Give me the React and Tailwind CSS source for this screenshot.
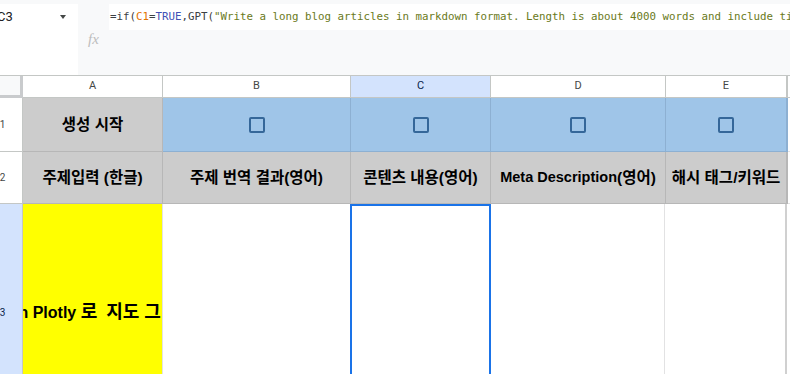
export default function App() {
  const sheetFont = { fontFamily: '"Liberation Sans", "Noto Sans CJK KR", Arial, sans-serif' };
  const headFont = { fontFamily: 'Roboto, "Liberation Sans", sans-serif' };

  const Checkbox = () => (
    <div className="w-[16px] h-[16px] rounded-[2px] border-[2.5px] border-[#356799]" />
  );

  return (
    <div className="w-[790px] h-[374px] overflow-hidden bg-white relative">
      {/* top strip */}
      <div className="h-[4px] bg-[#f8f9fa]" />
      {/* formula area */}
      <div className="flex h-[72px] border-b border-[#c4c7c5]">
        <div className="w-[78px] shrink-0 bg-white flex items-start pt-[4px]">
          <span className="ml-[-3px] text-[13px] text-[#202124] leading-[18px]" style={headFont}>C3</span>
          <div className="ml-[47px] mt-[7px] w-0 h-0 border-l-[3.5px] border-r-[3.5px] border-t-[4px] border-l-transparent border-r-transparent border-t-[#444746]" />
        </div>
        <div className="flex-1 min-w-0 bg-[#f8f9fa] flex">
          <div className="w-[31px] shrink-0 flex items-end justify-center pb-[28px]">
            <span className="italic text-[15px] text-[#bdbdbd] leading-none" style={{ fontFamily: '"Liberation Serif", serif' }}>fx</span>
          </div>
          <div className="flex-1 min-w-0 self-start h-[26px] bg-white flex items-center overflow-hidden whitespace-nowrap">
            <span className="text-[10.8px] pl-[1px] text-[#3c4043]" style={{ fontFamily: '"DejaVu Sans Mono", "Liberation Mono", monospace' }}>
              =if(<span className="text-[#e37400]">C1</span>=<span className="text-[#3f51b5]">TRUE</span>,GPT(<span className="text-[#6a7a1b]">"Write a long blog articles in markdown format. Length is about 4000 words and include titles</span>
            </span>
          </div>
        </div>
      </div>

      {/* column header row */}
      <div className="flex h-[22px] text-[11px] text-[#444746]" style={headFont}>
        <div className="w-[23px] shrink-0 bg-[#f8f9fa] border-r-[3px] border-b-[3px] border-[#c9cbcd]" />
        <div className="w-[140px] shrink-0 border-r border-b border-[#c4c7c5] flex items-center justify-center">A</div>
        <div className="w-[188px] shrink-0 border-r border-b border-[#c4c7c5] flex items-center justify-center">B</div>
        <div className="w-[140px] shrink-0 bg-[#d3e3fd] border-r border-b border-[#c4c7c5] flex items-center justify-center text-[#0b1f4a]">C</div>
        <div className="w-[175px] shrink-0 border-r border-b border-[#c4c7c5] flex items-center justify-center">D</div>
        <div className="w-[122px] shrink-0 border-r-2 border-b border-[#c4c7c5] flex items-center justify-center">E</div>
        <div className="flex-1 border-b border-[#c4c7c5]" />
      </div>

      {/* row 1 */}
      <div className="flex h-[54px]" style={sheetFont}>
        <div className="w-[23px] shrink-0 border-r border-b border-[#c4c7c5] overflow-hidden flex items-center">
          <div className="w-[5px] flex justify-center text-[10px] text-[#444746]" style={headFont}>1</div>
        </div>
        <div className="w-[140px] shrink-0 bg-[#cccccc] border-r border-b border-[#b7b7b7] flex items-center justify-center font-bold text-[15.5px] text-black">생성 시작</div>
        <div className="w-[188px] shrink-0 bg-[#9fc5e8] border-r border-b border-[#8db0d2] flex items-center justify-center"><Checkbox /></div>
        <div className="w-[140px] shrink-0 bg-[#9fc5e8] border-r border-b border-[#8db0d2] flex items-center justify-center"><Checkbox /></div>
        <div className="w-[175px] shrink-0 bg-[#9fc5e8] border-r border-b border-[#8db0d2] flex items-center justify-center"><Checkbox /></div>
        <div className="w-[122px] shrink-0 bg-[#9fc5e8] border-r-2 border-b border-[#8db0d2] flex items-center justify-center"><Checkbox /></div>
        <div className="flex-1 bg-white border-b border-[#e2e2e3]" />
      </div>

      {/* row 2 */}
      <div className="flex h-[52px] font-bold text-[15.5px] text-black" style={sheetFont}>
        <div className="w-[23px] shrink-0 border-r border-b border-[#c4c7c5] overflow-hidden flex items-center font-normal">
          <div className="w-[5px] flex justify-center text-[10px] text-[#444746]" style={headFont}>2</div>
        </div>
        <div className="w-[140px] shrink-0 bg-[#cccccc] border-r border-b border-[#b7b7b7] flex items-center justify-center whitespace-nowrap">주제입력 (한글)</div>
        <div className="w-[188px] shrink-0 bg-[#cccccc] border-r border-b border-[#b7b7b7] flex items-center justify-center whitespace-nowrap">주제 번역 결과(영어)</div>
        <div className="w-[140px] shrink-0 bg-[#cccccc] border-r border-b border-[#b7b7b7] flex items-center justify-center overflow-hidden whitespace-nowrap">콘텐츠 내용(영어)</div>
        <div className="w-[175px] shrink-0 bg-[#cccccc] border-r border-b border-[#b7b7b7] flex items-center justify-center whitespace-nowrap">
          <span className="text-[14.5px]">Meta Description</span>(영어)
        </div>
        <div className="w-[122px] shrink-0 bg-[#cccccc] border-r-2 border-b border-[#b7b7b7] flex items-center justify-center overflow-hidden whitespace-nowrap">해시 태그/키워드</div>
        <div className="flex-1 bg-white border-b border-[#e2e2e3]" />
      </div>

      {/* row 3 */}
      <div className="flex h-[216px]" style={sheetFont}>
        <div className="w-[23px] shrink-0 bg-[#d3e3fd] border-r border-[#c4c7c5] overflow-hidden flex items-center">
          <div className="w-[5px] flex justify-center text-[10px] text-[#0b1f4a]" style={headFont}>3</div>
        </div>
        <div className="w-[140px] shrink-0 bg-[#ffff00] border-r border-[#e2e2e3] flex items-center justify-start overflow-hidden whitespace-nowrap font-bold text-[16px] text-black">
          <span className="ml-[-49px]">Python Plotly <span className="text-[18px]">로</span>&nbsp; <span className="text-[18px]">지도 그리기</span></span>
        </div>
        <div className="w-[188px] shrink-0 border-r border-[#e2e2e3]" />
        <div className="w-[141px] shrink-0 ml-[-1px] border-l-2 border-t-2 border-r-2 border-[#1a73e8]" />
        <div className="w-[174px] shrink-0 border-r border-[#e2e2e3]" />
        <div className="w-[122px] shrink-0 border-r-2 border-[#d0d0d0]" />
        <div className="flex-1" />
      </div>
    </div>
  );
}
